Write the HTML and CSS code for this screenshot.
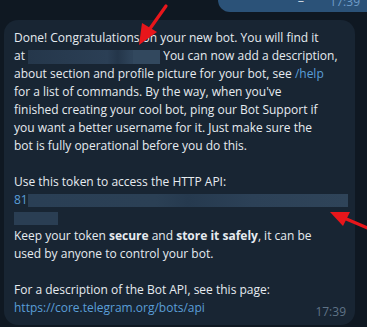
FILE: index.html
```html
<!DOCTYPE html>
<html>
<head>
<meta charset="utf-8">
<link rel="stylesheet" href="styles.css">
</head>
<body>
<div class="chat">
  <div class="out">
    <span class="out-text">CatFactsBot_bot</span>
    <span class="out-time">17:39</span>
  </div>
  <div class="bubble">
    <p class="para">Done! Congratulations on your new bot. You will find it<br>at <span class="blur blur-name"><span class="blur-hi"></span></span> You can now add a description,<br>about section and profile picture for your bot, see <a class="link">/help</a><br>for a list of commands. By the way, when you've<br>finished creating your cool bot, ping our Bot Support if<br>you want a better username for it. Just make sure the<br>bot is fully operational before you do this.</p>
    <p class="para">Use this token to access the HTTP API:<br><span class="code">81</span><span class="blur blur-token"></span><br><span class="blur blur-token2"></span><br>Keep your token <b>secure</b> and <b>store it safely</b>, it can be<br>used by anyone to control your bot.</p>
    <p class="para last">For a description of the Bot API, see this page:<br><a class="link">https://core.telegram.org/bots/api</a><span class="time">17:39</span></p>
  </div>
</div>
<svg class="arrow arrow-1" width="40" height="50" viewBox="0 0 40 50">
  <line x1="34" y1="4" x2="17" y2="28" stroke="#e8161b" stroke-width="3.2" stroke-linecap="round"/>
  <polygon points="7,43 10,21 25,30" fill="#e8161b"/>
</svg>
<svg class="arrow arrow-2" width="42" height="30" viewBox="0 0 42 30">
  <line x1="44" y1="22" x2="16" y2="10" stroke="#e8161b" stroke-width="3.2" stroke-linecap="round"/>
  <polygon points="2,4 22,4 15,18" fill="#e8161b"/>
</svg>
</body>
</html>
```
FILE: styles.css
```css
html, body {
  margin: 0;
  padding: 0;
}
body {
  width: 367px;
  height: 327px;
  overflow: hidden;
  background: #0f1822;
  font-family: "Open Sans", "Noto Sans", sans-serif;
  font-size: 12px;
  color: #e6ebf0;
  position: relative;
}
.chat {
  display: flex;
  flex-direction: column;
  padding-left: 4px;
}
.out {
  align-self: flex-end;
  width: 149px;
  height: 12px;
  background: #2b5278;
  border-bottom-left-radius: 12px;
  display: flex;
  align-items: flex-end;
  justify-content: space-between;
  padding: 0 7px 0 14px;
  box-sizing: border-box;
  color: #e6ebf0;
  overflow: hidden;
}
.out-text {
  line-height: 18px;
  margin-bottom: 7px;
}
.out-time {
  font-size: 12px;
  color: #6f9cc8;
  line-height: 14px;
  margin-bottom: 3px;
}
.bubble {
  margin-top: 8px;
  width: 351px;
  box-sizing: border-box;
  background: #182533;
  border-radius: 14px;
  padding: 9px 8px 8px 10px;
  line-height: 18px;
  position: relative;
}
.para {
  margin: 0 0 18px 0;
  white-space: nowrap;
}
.para.last {
  margin-bottom: 0;
}
.link {
  color: #5a9ed8;
}
.code {
  color: #5a9ed8;
}
b {
  font-weight: 700;
}
.blur {
  display: inline-block;
  vertical-align: middle;
  background: #283b50;
}
.blur-name {
  width: 132px;
  height: 14px;
  position: relative;
  background: linear-gradient(90deg, #25374b, #2b3f55 60%, #24364a 68%, #2e4359 78%, #2e4359);
}
.blur-hi {
  position: absolute;
  left: 105px;
  top: 0;
  width: 27px;
  height: 14px;
  background: #32485e;
}
.blur-token {
  width: 320px;
  height: 13px;
  background: linear-gradient(90deg, #2a3f55, #2b4055 40%, #263a4f 50%, #2c4157 70%, #2f4459);
}
.blur-token2 {
  width: 44px;
  height: 13px;
  background: #2a3e53;
}
.time {
  position: absolute;
  right: 9px;
  bottom: 6px;
  font-size: 12px;
  color: #5f7387;
  line-height: 14px;
}
.arrow {
  position: absolute;
}
.arrow-1 {
  left: 132px;
  top: 2px;
}
.arrow-2 {
  left: 328px;
  top: 208px;
}
```
